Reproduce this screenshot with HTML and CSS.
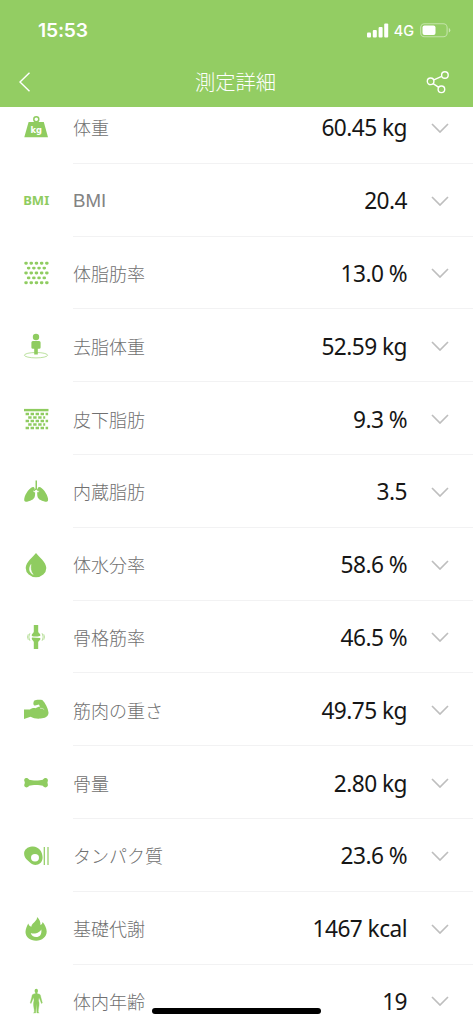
FILE: index.html
```html
<!DOCTYPE html>
<html lang="ja">
<head>
<meta charset="utf-8">
<title>測定詳細</title>
<link rel="stylesheet" href="styles.css">
</head>
<body>
<div class="screen">
  <header class="header">
    <div class="status">
      <span class="time">15:53</span>
      <div class="signals">
        <svg class="bars" width="22" height="15" viewBox="0 0 22 15"><rect x="0" y="9.5" width="4" height="5" rx="1"/><rect x="5.8" y="7" width="4" height="7.5" rx="1"/><rect x="11.6" y="4" width="4" height="10.5" rx="1"/><rect x="17.2" y="0.5" width="4" height="14" rx="1"/></svg>
        <span class="network">4G</span>
        <svg class="battery" width="31" height="15" viewBox="0 0 31 15"><rect x=".7" y=".7" width="26.4" height="13" rx="3.8" fill="none" stroke="#fff" stroke-opacity=".45" stroke-width="1.1"/><rect x="2.5" y="2.4" width="13" height="9.6" rx="2" fill="#fff"/><path d="M28.8 5v4.6q1.5-.6 1.5-2.3T28.800 5z" fill="#fff" opacity=".5"/></svg>
      </div>
    </div>
    <nav class="nav">
      <svg width="12" height="20" viewBox="0 0 12 20"><path d="M10.500 .7 1 10l9.500 9.300"/></svg>
      <h1 class="title">測定詳細</h1>
      <svg width="24" height="24" viewBox="0 0 24 24"><circle cx="4.600" cy="11.300" r="3.300"/><circle cx="18.900" cy="5" r="3.300"/><circle cx="15.400" cy="19.300" r="3.300"/><path d="m7.800 9.900 7.900-3.500M7.100 13.700l5.700 3.700"/></svg>
    </nav>
  </header>
  <main class="list">
    <section class="row"><svg class="icon" viewBox="0 0 24 24"><circle cx="12.300" cy="3.200" r="2.500" fill="none" stroke="#8fcc60" stroke-width="1.500"/><path d="M4.600 6h15.200L24 21.300H.3z"/><text class="kg" x="12.200" y="16.500" textLength="11.500" lengthAdjust="spacingAndGlyphs">kg</text></svg><div class="detail"><span class="label">体重</span><span class="value">60.45 kg</span><svg class="chevron" viewBox="0 0 18 10"><path d="m1 1 8 8 8-8"/></svg></div></section>
    <section class="row"><svg class="icon" viewBox="0 0 24 24"><text class="bmi" x="-.8" y="15.600" textLength="26" lengthAdjust="spacingAndGlyphs">BMI</text></svg><div class="detail"><span class="label latin">BMI</span><span class="value">20.4</span><svg class="chevron" viewBox="0 0 18 10"><path d="m1 1 8 8 8-8"/></svg></div></section>
    <section class="row"><svg class="icon dots" viewBox="0 0 24 24"><path d="M1.700 2.200h22M4.300 7.100h17M1.700 12h22M4.300 16.900h17M1.700 21.800h22"/></svg><div class="detail"><span class="label">体脂肪率</span><span class="value">13.0 %</span><svg class="chevron" viewBox="0 0 18 10"><path d="m1 1 8 8 8-8"/></svg></div></section>
    <section class="row"><svg class="icon" viewBox="0 0 24 24"><ellipse cx="12" cy="21.200" rx="11.600" ry="2.700" fill="none" stroke="#8fcc60" stroke-width=".6"/><circle cx="12" cy="3" r="3.200"/><path d="M8.900 7h6.200q1.500 0 1.500 1.500v5q0 1.300-1.500 1.300h-1.300v5.700h-3.600v-5.700H8.900q-1.500 0-1.500-1.300v-5Q7.400 7 8.900 7z"/></svg><div class="detail"><span class="label">去脂体重</span><span class="value">52.59 kg</span><svg class="chevron" viewBox="0 0 18 10"><path d="m1 1 8 8 8-8"/></svg></div></section>
    <section class="row"><svg class="icon skin" viewBox="0 0 24 24"><path class="band" d="M0 3.100h24.500"/><path d="M1.600 7h22.500M4.200 10.500h17M1.600 14h22.500M4.200 17.500h17M1.600 21h22.500"/></svg><div class="detail"><span class="label">皮下脂肪</span><span class="value">9.3 %</span><svg class="chevron" viewBox="0 0 18 10"><path d="m1 1 8 8 8-8"/></svg></div></section>
    <section class="row"><svg class="icon" viewBox="0 0 24 24"><path d="M9.600 6.900C6.300 6.400 1 13.600.3 18.600c-.5 3.300 1 3.800 4.200 2.600 5.100-1.300 6.600-3 6.600-7.700C11.100 10 10.800 7.200 9.600 6.900z"/><path d="M14.800 6.900c3.200-.5 8.500 6.700 9.200 11.700.5 3.300-1 3.800-4.200 2.600-5.100-1.300-6.600-3-6.600-7.700 0-3.500.4-6.300 1.600-6.600z"/><path d="m12.200 9.500-2.500 2.300M12.200 9.500l2.500 2.300" stroke="#fff" stroke-width="2"/><path d="M11.500.500h1.500v8l2.200 2.200-.8.9-2.200-2-2.200 2-.8-.9 2.300-2.200z"/></svg><div class="detail"><span class="label">内蔵脂肪</span><span class="value">3.5</span><svg class="chevron" viewBox="0 0 18 10"><path d="m1 1 8 8 8-8"/></svg></div></section>
    <section class="row"><svg class="icon" viewBox="0 0 24 24"><path d="M12 0C9 4 1.700 9.300 1.700 15A10.300 9.300 0 0 0 22.300 15C22.300 9.300 15 4 12 0z"/><path d="M7 11.500C4.500 15 5 19.500 9.200 21.500 6.800 18.500 6.300 15 7 11.500z" fill="#fff" stroke="#fff" stroke-width=".4"/></svg><div class="detail"><span class="label">体水分率</span><span class="value">58.6 %</span><svg class="chevron" viewBox="0 0 18 10"><path d="m1 1 8 8 8-8"/></svg></div></section>
    <section class="row"><svg class="icon" viewBox="0 0 24 24"><path d="M9.800 0h4.400v6.500c0 1.600 2 2 2.200 3.600.2 1.500-2.200 1.300-4.200 1.300s-5 .2-4.500-1.500c.4-1.300 2.100-1.700 2.100-3.400zM8 12.600l8.200.4c.8 2.300-1.600 2.600-2 4.200v6.800H9.800v-6.800C9.600 15.500 7 14.700 8 12.600z"/><path d="M5.900 8.200q-2.200 3.800 0 7.600M4.300 9.200q-1.600 2.800 0 5.600M18.100 8.200q2.200 3.800 0 7.600M19.700 9.200q1.600 2.800 0 5.600" fill="none" stroke="#8fcc60" stroke-width=".6"/></svg><div class="detail"><span class="label">骨格筋率</span><span class="value">46.5 %</span><svg class="chevron" viewBox="0 0 18 10"><path d="m1 1 8 8 8-8"/></svg></div></section>
    <section class="row"><svg class="icon" viewBox="0 0 24 24"><path d="M0 11.500 6 11.400c1.500-1.200 3.500-1.800 5.500-1.200 1.300-.9 2.800-1.500 4.400-1.500l-.9-2.200c-1.700.3-3.600 1.500-5 .7-1.200-.7-.6-3.600.4-4.700 1-.9 5.200-.8 7.900-.6 3 3.100 5.700 7.800 6.200 12.700.2 4.500-4.100 5.800-7.800 6-4 .3-7.500-.2-10.200-1.800L0 20.900z"/><path d="M16 10.300q3-.3 4.200 1.300" fill="none" stroke="#fff" stroke-width=".5"/></svg><div class="detail"><span class="label">筋肉の重さ</span><span class="value">49.75 kg</span><svg class="chevron" viewBox="0 0 18 10"><path d="m1 1 8 8 8-8"/></svg></div></section>
    <section class="row"><svg class="icon" viewBox="0 0 24 24"><path d="M.6 10.600C-1 7.500 3 5.300 5.200 8.700c3 .9 10.600.9 13.600 0 2.200-3.400 6.200-1.200 4.900 1.900-.4.700-.4 1.500 0 2.200 1.300 3.100-2.700 5.300-4.900 1.900-3-.9-10.600-.9-13.600 0-2.200 3.400-6.200 1.200-4.600-1.900.3-.7.300-1.500 0-2.200z"/></svg><div class="detail"><span class="label">骨量</span><span class="value">2.80 kg</span><svg class="chevron" viewBox="0 0 18 10"><path d="m1 1 8 8 8-8"/></svg></div></section>
    <section class="row"><svg class="icon" viewBox="0 0 24 24"><path d="M8 2.600c6-.7 10.600 4.600 10.600 10.700 0 5-3.300 7.700-7.300 7.700-3.300 0-5.300-2.400-7.500-4.400C1.400 14.400 0 12.200.1 9.300.3 5.600 3.500 3.100 8 2.600z"/><ellipse cx="11" cy="13.700" rx="4" ry="3.700" fill="#fff"/><path d="M20.300 3v18M24 3v18" stroke="#8fcc60" stroke-width="1.200"/></svg><div class="detail"><span class="label">タンパク質</span><span class="value">23.6 %</span><svg class="chevron" viewBox="0 0 18 10"><path d="m1 1 8 8 8-8"/></svg></div></section>
    <section class="row"><svg class="icon" viewBox="0 0 24 24"><path d="M13 0c2.600 2.300 3.700 5 3.400 8 1.400-.5 2-1.500 2.200-3 2.100 2.300 4.100 6.500 4.100 9.600C22.700 20 18 23.700 12.200 23.700 6 23.700 1.500 20.200 1.500 15c0-3.100 1.600-6.200 2.800-8.500.6 2 1.600 2.800 3 3.200C8 5.700 13.500 4.200 13 0z"/><path d="M6.800 16q2 .8 4.300.5c3-.4 5-2 6.200-4 .7 5-1.600 7.600-5.100 7.600-2.700 0-4.900-1.500-5.400-4.100z" fill="#fff"/></svg><div class="detail"><span class="label">基礎代謝</span><span class="value">1467 kcal</span><svg class="chevron" viewBox="0 0 18 10"><path d="m1 1 8 8 8-8"/></svg></div></section>
    <section class="row"><svg class="icon" viewBox="0 0 24 24"><ellipse cx="12.300" cy="1.900" rx="1.700" ry="2.100"/><path d="M11.500 3.500h1.600v.9l2.300.8c1 .3 1.200 1.300 1.400 2.700l1.600 6-.9.7-2.500-6.200-.4 3c1.200 3.500.2 6.300-.2 9.300l-.2 2.500 1 .8h-2.300l-.6-9.200-.6 9.200H9.400l1-.8-.2-2.500c-.4-3-1.400-5.800-.2-9.300l-.4-3-2.500 6.200-.9-.7 1.600-6c.2-1.400.4-2.400 1.400-2.700l2.300-.8z" stroke="#8fcc60" stroke-width=".3"/></svg><div class="detail"><span class="label">体内年齢</span><span class="value">19</span><svg class="chevron" viewBox="0 0 18 10"><path d="m1 1 8 8 8-8"/></svg></div></section>
  </main>
  <div class="home-indicator"></div>
</div>
</body>
</html>
```
FILE: styles.css
```css
* { box-sizing: border-box; }

body {
  margin: 0;
  background: #fff;
  font-family: "Noto Sans CJK JP", sans-serif;
}

.screen {
  position: relative;
  height: 1024px;
  overflow: hidden;
  display: flex;
  flex-direction: column;
}

.header {
  position: relative;
  z-index: 1;
  flex: none;
  height: 107px;
  background: #93cd63;
  color: #fff;
}

.status {
  display: flex;
  align-items: center;
  justify-content: space-between;
  height: 60px;
  padding: 0 22px 0 38px;
}

.time {
  font: 600 19.3px Inter, sans-serif;
  letter-spacing: -0.2px;
}

.signals { display: flex; align-items: center; }
.bars { fill: #fff; }
.network {
  margin: 0 6px 0 5px;
  font: 500 14.5px Inter, sans-serif;
}

.nav {
  display: grid;
  grid-template-columns: 24px 1fr 24px;
  align-items: center;
  height: 44px;
  padding: 0 23px 0 19px;
}

.nav svg {
  fill: none;
  stroke: #fff;
  stroke-width: 1.4;
}

.title {
  margin: 0 0 2px 2px;
  text-align: center;
  font-size: 20.3px;
  font-weight: 300;
}

.list { flex: none; margin-top: -16px; }

.row {
  display: flex;
  align-items: center;
  height: 72.8px;
  padding-left: 24px;
}

.icon {
  flex: none;
  width: 24px;
  height: 24px;
  margin: 1px 25px 0 0;
  overflow: visible;
  fill: #8fcc60;
}

.kg {
  fill: #fff;
  font: 700 8.5px "DejaVu Sans", sans-serif;
  text-anchor: middle;
}

.bmi { font: 700 12px "Noto Sans", sans-serif; }

.dots {
  stroke: #8fcc60;
  stroke-width: 2.9;
  stroke-linecap: round;
  stroke-dasharray: 0.7 4.5;
}

.skin {
  stroke: #8fcc60;
  stroke-width: 2.3;
  stroke-dasharray: 3.4 1.6;
}

.band { stroke-width: 2.4; stroke-dasharray: none; }

.detail {
  display: flex;
  align-items: center;
  flex: 1;
  height: 100%;
  padding: 1px 24px 0 0;
  border-bottom: 1px solid #f2f2f3;
}

.label {
  color: #707070;
  font-size: 18px;
  font-weight: 300;
}

.latin {
  margin-top: 2px;
  font-family: "Liberation Sans", sans-serif;
  color: #838383;
  font-size: 18.7px;
}

.value {
  margin: 1px 0 0 auto;
  color: #161616;
  font: 400 22.700px "Noto Sans", sans-serif;
  letter-spacing: -0.55px;
}

.chevron {
  width: 18px;
  height: 10px;
  margin: 1px 0 0 24px;
  fill: none;
  stroke: #bebebe;
  stroke-width: 1.700;
}

.home-indicator {
  position: absolute;
  z-index: 2;
  bottom: 10px;
  left: 152px;
  width: 169px;
  height: 6px;
  border-radius: 3px;
  background: #000;
}
```
